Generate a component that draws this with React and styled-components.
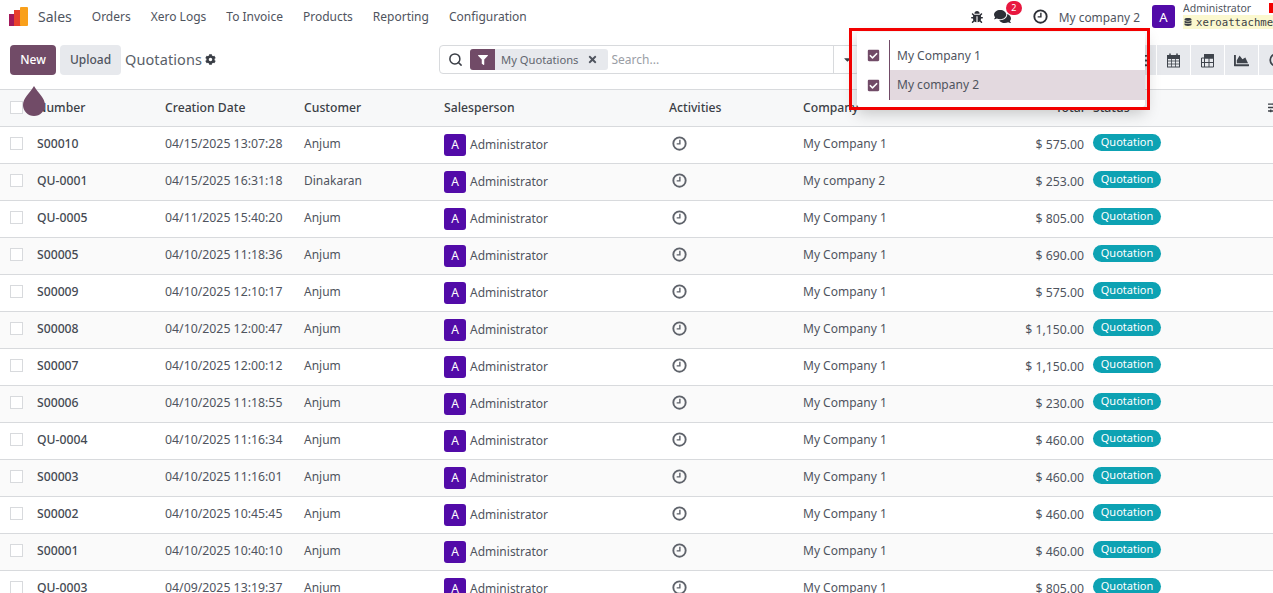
import React from 'react';
import styled, { createGlobalStyle } from 'styled-components';
import { FaBug, FaComments, FaCog, FaFilter, FaCheckSquare, FaDatabase, FaChartArea, FaTimes, FaCaretDown, FaSlidersH, FaTasks } from 'react-icons/fa';
import { Search } from 'lucide-react';

const GlobalStyle = createGlobalStyle`
  html, body { margin: 0; padding: 0; height: 593px; overflow: hidden; background: #fff; }
  body { font-family: "Noto Sans", "Open Sans", sans-serif; font-size: 12px; color: #4f545e; }
`;

const Page = styled.div`
  position: relative;
  width: 1273px;
  height: 593px;
  overflow: hidden;
`;

const Navbar = styled.nav`
  display: flex;
  align-items: center;
  height: 34px;
  box-sizing: border-box;
  padding: 0 0 1px 9px;
  white-space: nowrap;
`;
const Logo = styled.svg`
  width: 20px;
  height: 20px;
  margin-right: 9px;
`;
const Brand = styled.span`
  font-size: 14px;
  margin-right: 20px;
  color: #4f5560;
`;
const MenuItem = styled.span`
  font-size: 12px;
  margin-right: 20px;
`;
const NavRight = styled.div`
  margin-left: auto;
  display: flex;
  align-items: center;
  height: 100%;
`;
const BugIcon = styled(FaBug)`
  font-size: 12px;
  color: #2c2f36;
  margin-right: 11px;
`;
const Chat = styled.div`
  position: relative;
  display: flex;
  margin-right: 22px;
  color: #2c2f36;
  font-size: 17px;
`;
const Badge = styled.span`
  position: absolute;
  top: -7px;
  left: 12px;
  width: 16px;
  height: 14px;
  border-radius: 8px;
  background: #e8173f;
  color: #fff;
  font-size: 9px;
  line-height: 14px;
  text-align: center;
`;
const Clock = styled.svg`
  width: ${p => p.$size}px;
  height: ${p => p.$size}px;
  display: block;
`;
const NavClock = styled.div`
  margin-right: 11px;
`;
const CompanyName = styled.span`
  font-size: 11.9px;
  margin-right: 12px;
`;
const Avatar = styled.span`
  display: inline-flex;
  align-items: center;
  justify-content: center;
  flex: none;
  width: ${p => p.$size}px;
  height: ${p => p.$size}px;
  border-radius: 3px;
  background: #520ba8;
  color: #fff;
  font-size: ${p => (p.$size > 22 ? 13 : 12)}px;
`;
const UserBlock = styled.div`
  margin-left: 8px;
  width: 90px;
  overflow: hidden;
  line-height: 13px;
  align-self: flex-start;
  padding-top: 2px;
`;
const UserName = styled.div`
  font-size: 10.5px;
`;
const DbTag = styled.div`
  display: flex;
  align-items: center;
  gap: 4px;
  background: #fbf8cf;
  font-family: "DejaVu Sans Mono", monospace;
  font-size: 10.7px;
  color: #3b3f46;
  height: 14px;
  padding-left: 1px;
  svg { font-size: 8px; flex: none; }
`;

const ControlPanel = styled.div`
  display: flex;
  align-items: center;
  height: 56px;
  box-sizing: border-box;
  padding: 0 0 3px 10px;
  border-bottom: 1px solid #d8dadd;
`;
const PrimaryButton = styled.button`
  width: 46px;
  height: 30px;
  border: 0;
  border-radius: 4px;
  background: #714b67;
  color: #fff;
  font: 500 12px "Noto Sans", sans-serif;
  margin-right: 4px;
  padding: 0 0 2px;
`;
const SecondaryButton = styled(PrimaryButton)`
  width: 61px;
  background: #e7e9ed;
  color: #4f545e;
`;
const PageTitle = styled.span`
  font-size: 14.5px;
  letter-spacing: 0.1px;
  color: #5a5f69;
`;
const TitleRow = styled.div`
  width: 314px;
  display: flex;
  align-items: center;
  gap: 3px;
  padding-bottom: 2px;
  svg { font-size: 11px; color: #3a3e46; }
`;
const SearchBox = styled.div`
  display: flex;
  align-items: center;
  width: 421px;
  height: 29px;
  margin-bottom: 1px;
  box-sizing: border-box;
  border: 1px solid #d8dadd;
  border-radius: 4px;
  padding-left: 8px;
  > svg:first-child { color: #3a3e46; margin-right: 7px; flex: none; }
`;
const Facet = styled.div`
  display: flex;
  align-items: center;
  height: 21px;
  background: #e7e9ed;
  border-radius: 3px;
  overflow: hidden;
  font-size: 11.2px;
  color: #62666f;
`;
const FacetIcon = styled.span`
  display: flex;
  align-items: center;
  justify-content: center;
  width: 25px;
  height: 100%;
  background: #714b67;
  color: #fff;
  font-size: 10px;
  margin-right: 6px;
`;
const FacetClose = styled(FaTimes)`
  margin: 0 10px 0 9px;
  font-size: 11px;
  color: #4f545e;
`;
const SearchText = styled.span`
  margin-left: 3px;
  color: #9a9ea5;
  font-size: 12px;
  flex: 1;
`;
const SearchToggle = styled.span`
  display: flex;
  align-items: center;
  justify-content: flex-start;
  box-sizing: border-box;
  padding-left: 8px;
  width: 26px;
  height: 100%;
  border-left: 1px solid #d8dadd;
  font-size: 11px;
  color: #3a3e46;
`;
const ViewButtons = styled.div`
  display: flex;
  margin-left: auto;
  margin-right: -19px;
  gap: 1px;
`;
const ViewButton = styled.span`
  display: flex;
  align-items: center;
  justify-content: center;
  width: 33px;
  height: 30px;
  background: #e7e9ed;
  color: #3f444c;
  font-size: 15px;
`;
const ViewIcon = styled.svg`
  width: 15px;
  height: 15px;
  display: block;
`;

const Row = styled.div`
  display: grid;
  grid-template-columns: 37px 128px 139px 140px 225px 134px 196px 1fr;
  align-items: center;
  height: 37px;
  box-sizing: border-box;
  padding-bottom: ${p => (p.$head ? 2 : 3)}px;
  border-bottom: 1px solid #d8dadd;
  background: ${p => (p.$head ? '#f7f8f9' : p.$alt ? '#fafafa' : '#fff')};
  color: ${p => (p.$head ? '#3b3f46' : '#4f545e')};
  font-size: ${p => (p.$head ? 12.2 : 12)}px;
  font-weight: ${p => (p.$head ? 500 : 400)};
  white-space: nowrap;
`;
const Check = styled.span`
  display: block;
  box-sizing: border-box;
  width: 13px;
  height: 13px;
  margin-left: 10px;
  border: 1px solid #d8dadd;
  background: #fff;
`;
const Number = styled.span`
  font-weight: 500;
  font-size: 12.2px;
  color: #444952;
`;
const DateCell = styled.span`
  font-size: 12.3px;
`;
const Person = styled.span`
  display: flex;
  align-items: center;
  gap: 4px;
  padding-top: 2px;
`;
const Activity = styled.span`
  padding-left: 3px;
`;
const TotalStatus = styled.div`
  display: flex;
  align-items: center;
`;
const Amount = styled.span`
  width: 85px;
  font-size: 12.25px;
  text-align: right;
  margin-right: 9px;
  padding-top: 1px;
`;
const Pill = styled.span`
  width: 68px;
  height: 17px;
  border-radius: 9px;
  background: #0da2b3;
  color: #fff;
  font-size: 11px;
  line-height: 15px;
  text-align: center;
  margin-top: -3px;
`;
const HeadRight = styled(TotalStatus)`
  justify-content: space-between;
  svg { font-size: 11px; margin-right: -6px; }
`;

const Dropdown = styled.div`
  position: absolute;
  left: 857px;
  top: 32px;
  width: 288px;
  height: 75px;
  box-sizing: border-box;
  padding-top: 8px;
  background: #fff;
  border-radius: 3px;
  box-shadow: 0 6px 16px rgba(0, 0, 0, 0.22);
`;
const CompanyRow = styled.div`
  display: flex;
  align-items: center;
  height: 30px;
  background: ${p => (p.$active ? '#e3d9df' : 'transparent')};
  font-size: 12px;
`;
const CheckBox = styled.span`
  display: flex;
  justify-content: center;
  width: 32px;
  flex: none;
  background: #fff;
  height: 100%;
  align-items: center;
  color: #714b67;
  font-size: 13px;
`;
const CompanyLabel = styled.span`
  display: flex;
  align-items: center;
  height: 100%;
  box-sizing: border-box;
  padding: 0 0 ${p => (p.$active ? 2 : 0)}px 7px;
  border-left: 1px solid #714b67;
`;
const Highlight = styled.div`
  position: absolute;
  left: 849px;
  top: 28px;
  width: 295px;
  height: 76px;
  border: 3px solid #f20000;
  pointer-events: none;
`;
const Drop = styled.svg`
  position: absolute;
  left: 21px;
  top: 85px;
  width: 26px;
  height: 32px;
`;
const EdgeMark = styled.span`
  position: absolute;
  right: 0;
  top: 3px;
  width: 4px;
  height: 10px;
  background: #f20000;
`;

const ClockIcon = ({ size, color }) => (
  <Clock $size={size} viewBox="0 0 16 16" fill="none" stroke={color} strokeWidth="2">
    <circle cx="8" cy="8" r="6.6" />
    <path d="M8.4 4v4.4H5" strokeWidth="1.5" />
  </Clock>
);

const CalendarIcon = () => (
  <ViewIcon viewBox="0 0 15 15" fill="none" stroke="currentColor">
    <rect x="1.5" y="2.5" width="12" height="11.5" />
    <path d="M1.5 3h12v2.5h-12z" fill="currentColor" />
    <path d="M4 .5v3M11 .5v3" strokeWidth="1.5" />
    <path d="M1.5 8h12M1.5 11h12M5.5 5.5V14M9.5 5.5V14" strokeWidth=".8" />
  </ViewIcon>
);

const PivotIcon = () => (
  <ViewIcon viewBox="0 0 15 15" fill="none" stroke="currentColor">
    <path d="M4.5 1.5h9v12.5h-12V5h12M1.5 9.5h12M4.5 1.5V14M9 1.5V14" />
    <path d="M4.5 1.5h9V5h-9z" fill="currentColor" />
  </ViewIcon>
);

const rows = [
  ['S00010', '04/15/2025 13:07:28', 'Anjum', 'My Company 1', '$ 575.00'],
  ['QU-0001', '04/15/2025 16:31:18', 'Dinakaran', 'My company 2', '$ 253.00'],
  ['QU-0005', '04/11/2025 15:40:20', 'Anjum', 'My Company 1', '$ 805.00'],
  ['S00005', '04/10/2025 11:18:36', 'Anjum', 'My Company 1', '$ 690.00'],
  ['S00009', '04/10/2025 12:10:17', 'Anjum', 'My Company 1', '$ 575.00'],
  ['S00008', '04/10/2025 12:00:47', 'Anjum', 'My Company 1', '$ 1,150.00'],
  ['S00007', '04/10/2025 12:00:12', 'Anjum', 'My Company 1', '$ 1,150.00'],
  ['S00006', '04/10/2025 11:18:55', 'Anjum', 'My Company 1', '$ 230.00'],
  ['QU-0004', '04/10/2025 11:16:34', 'Anjum', 'My Company 1', '$ 460.00'],
  ['S00003', '04/10/2025 11:16:01', 'Anjum', 'My Company 1', '$ 460.00'],
  ['S00002', '04/10/2025 10:45:45', 'Anjum', 'My Company 1', '$ 460.00'],
  ['S00001', '04/10/2025 10:40:10', 'Anjum', 'My Company 1', '$ 460.00'],
  ['QU-0003', '04/09/2025 13:19:37', 'Anjum', 'My Company 1', '$ 805.00'],
];

export default function App() {
  return (
    <Page>
      <GlobalStyle />
      <Navbar>
        <Logo viewBox="0 0 20 20">
          <rect x="0" y="7" width="7" height="12" fill="#a3195b" />
          <rect x="5" y="3" width="7" height="16" fill="#e8402c" />
          <rect x="11" y="0" width="8" height="19" rx="1" fill="#f9a01b" />
        </Logo>
        <Brand>Sales</Brand>
        {['Orders', 'Xero Logs', 'To Invoice', 'Products', 'Reporting', 'Configuration'].map(m => (
          <MenuItem key={m}>{m}</MenuItem>
        ))}
        <NavRight>
          <BugIcon />
          <Chat>
            <FaComments />
            <Badge>2</Badge>
          </Chat>
          <NavClock><ClockIcon size={15} color="#2c2f36" /></NavClock>
          <CompanyName>My company 2</CompanyName>
          <Avatar $size={23}>A</Avatar>
          <UserBlock>
            <UserName>Administrator</UserName>
            <DbTag><FaDatabase />xeroattachment</DbTag>
          </UserBlock>
        </NavRight>
      </Navbar>

      <ControlPanel>
        <PrimaryButton>New</PrimaryButton>
        <SecondaryButton>Upload</SecondaryButton>
        <TitleRow>
          <PageTitle>Quotations</PageTitle>
          <FaCog />
        </TitleRow>
        <SearchBox>
          <Search size={15} strokeWidth={2.4} />
          <Facet>
            <FacetIcon><FaFilter /></FacetIcon>
            My Quotations
            <FacetClose />
          </Facet>
          <SearchText>Search...</SearchText>
          <SearchToggle><FaCaretDown /></SearchToggle>
        </SearchBox>
        <ViewButtons>
          <ViewButton><FaTasks /></ViewButton>
          <ViewButton><CalendarIcon /></ViewButton>
          <ViewButton><PivotIcon /></ViewButton>
          <ViewButton><FaChartArea /></ViewButton>
          <ViewButton><ClockIcon size={14} color="#3f444c" /></ViewButton>
        </ViewButtons>
      </ControlPanel>

      <Row $head>
        <Check />
        <span>Number</span>
        <span>Creation Date</span>
        <span>Customer</span>
        <span>Salesperson</span>
        <span>Activities</span>
        <span>Company</span>
        <HeadRight>
          <TotalStatus>
            <Amount>Total</Amount>
            <span>Status</span>
          </TotalStatus>
          <FaSlidersH />
        </HeadRight>
      </Row>
      {rows.map(([num, date, customer, company, total], i) => (
        <Row key={num} $alt={i % 2 === 1}>
          <Check />
          <Number>{num}</Number>
          <DateCell>{date}</DateCell>
          <span>{customer}</span>
          <Person>
            <Avatar $size={22}>A</Avatar>
            Administrator
          </Person>
          <Activity><ClockIcon size={15} color="#5f636b" /></Activity>
          <span>{company}</span>
          <TotalStatus>
            <Amount>{total}</Amount>
            <Pill>Quotation</Pill>
          </TotalStatus>
        </Row>
      ))}

      <Drop viewBox="0 0 26 32">
        <path d="M13 1 C17 8 24 13 24 20 A11 11 0 0 1 2 20 C2 13 9 8 13 1 Z" fill="#714b67" />
      </Drop>
      <Dropdown>
        <CompanyRow>
          <CheckBox><FaCheckSquare /></CheckBox>
          <CompanyLabel>My Company 1</CompanyLabel>
        </CompanyRow>
        <CompanyRow $active>
          <CheckBox><FaCheckSquare /></CheckBox>
          <CompanyLabel $active>My company 2</CompanyLabel>
        </CompanyRow>
      </Dropdown>
      <Highlight />
      <EdgeMark />
    </Page>
  );
}
